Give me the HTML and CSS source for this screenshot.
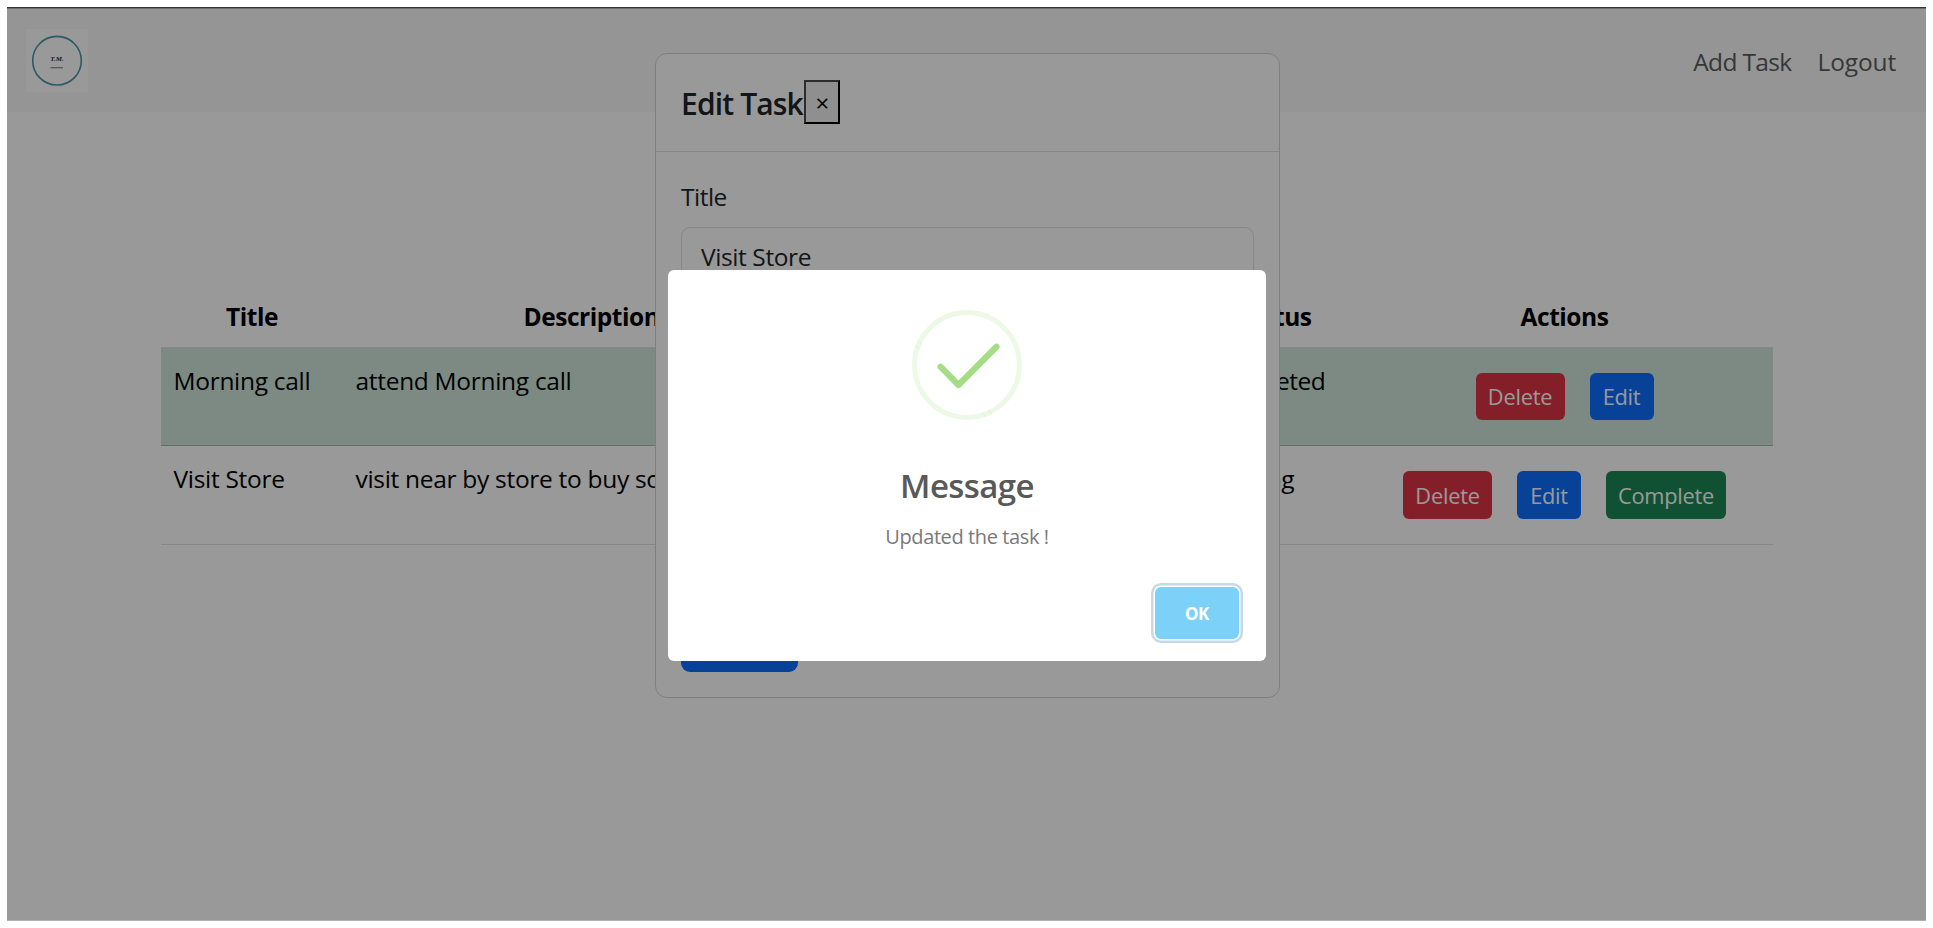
FILE: index.html
```html
<!DOCTYPE html>
<html lang="en">
<head>
<meta charset="utf-8">
<title>Task Manager</title>
<link rel="stylesheet" href="styles.css">
</head>
<body>
<div class="app">
  <header class="navbar">
    <div class="brand">
      <svg viewBox="0 0 62 63" width="62" height="63">
        <circle cx="31" cy="31.7" r="24.3" fill="none" stroke="#4a97a6" stroke-width="1.6"/>
        <text x="31" y="31.500" class="logo-name">T.M.</text>
        <path d="M24.5 38.700h12.5" stroke="#7e9297" stroke-width="1.2"/>
      </svg>
    </div>
    <nav class="links"><a class="l-add">Add Task</a><a class="l-out">Logout</a></nav>
  </header>

  <table class="tasks">
    <colgroup><col class="c1"><col class="c2"><col class="c3"><col class="c4"><col class="c5"></colgroup>
    <thead>
      <tr><th>Title</th><th>Description</th><th></th><th>Status</th><th>Actions</th></tr>
    </thead>
    <tbody>
      <tr class="done">
        <td>Morning call</td><td>attend Morning call</td><td></td><td>Completed</td>
        <td><div class="actions"><button class="btn red">Delete</button><button class="btn blue">Edit</button></div></td>
      </tr>
      <tr class="open">
        <td>Visit Store</td><td>visit near by store to buy some</td><td></td><td>Pending</td>
        <td><div class="actions"><button class="btn red">Delete</button><button class="btn blue">Edit</button><button class="btn green">Complete</button></div></td>
      </tr>
    </tbody>
  </table>

  <section class="editor">
    <div class="editor-head"><h5>Edit Task</h5><button class="close">×</button></div>
    <div class="editor-body">
      <label>Title</label>
      <div class="field">Visit Store</div>
      <div class="submit"></div>
    </div>
  </section>

  <div class="overlay"></div>

  <section class="dialog">
    <svg class="check" viewBox="0 0 110 110" width="110" height="110">
      <circle cx="55" cy="55" r="52.4" fill="none" stroke="#edf8e7" stroke-width="5"/>
      <path d="M5.500 30.500l4 3.500M3.500 35l3.500 3.500M70 102.500l4 4M76 100l4 4" stroke="#d5efc7" stroke-width=".7"/>
      <path d="M28.500 56.700L46.500 75L84.500 36.800" fill="none" stroke="#a5dc86" stroke-width="6.2" stroke-linecap="round" stroke-linejoin="round"/>
    </svg>
    <h2>Message</h2>
    <p>Updated the task !</p>
    <div class="dialog-foot"><button class="ok">OK</button></div>
  </section>
</div>
</body>
</html>
```
FILE: styles.css
```css
* { box-sizing: border-box; }
body { margin: 0; padding: 7px; background: #fff; font-family: "Open Sans", "Noto Sans", sans-serif; font-size: 24.5px; letter-spacing: -0.5px; color: #000; }
button { font-family: inherit; letter-spacing: inherit; margin: 0; }
.app { position: relative; width: 1919px; height: 914px; border-top: 1px solid #333335; border-bottom: 1px solid #b2b2b2; overflow: hidden; background: #fff; }

.navbar { height: 104px; padding: 0 30px 0 19px; display: flex; justify-content: space-between; align-items: center; background: #f8f9fa; border-top: 1px solid #b4b4b6; }
.brand { width: 62px; height: 63px; background: #fff; }
.brand svg { display: block; }
.logo-name { font: italic 700 7px "Liberation Serif", serif; text-anchor: middle; letter-spacing: 0; fill: #10353f; }
.links { display: flex; gap: 26px; padding-top: 2px; color: #5b5c5d; }
.l-add { letter-spacing: -0.65px; }
.l-out { letter-spacing: -0.15px; }

.tasks { width: 1612px; margin: 174px 0 0 154px; table-layout: fixed; border-collapse: separate; border-spacing: 0; line-height: 37px; }
.c1 { width: 182px; }
.c2 { width: 497px; }
.c3 { width: 352px; }
.c4 { width: 164px; }
.c5 { width: 417px; }
.tasks th { height: 62px; padding: 0 12px 1px; font-weight: 700; text-align: center; white-space: nowrap; letter-spacing: -0.45px; border-bottom: 1px solid #dee2e6; }
.tasks td { padding: 14px 12.500px 0; vertical-align: top; border-bottom: 1px solid #dee2e6; white-space: nowrap; letter-spacing: -0.3px; }
.tasks td:nth-child(4) { letter-spacing: -0.5px; }
.done td { height: 98px; background: #d1e7dd; border-bottom-color: #a7b9b1; }
.open td { height: 99px; }
.actions { display: flex; justify-content: center; gap: 25px; padding-top: 11px; }
.btn { height: 47px; padding: 0; border: 0; border-radius: 6px; color: #fff; font-size: 21.800px; line-height: 47px; letter-spacing: -0.25px; }
.open .btn { height: 48px; line-height: 49px; }
.red { width: 89px; background: #dc3545; }
.blue { width: 64px; background: #0d6efd; }
.green { width: 120px; background: #198754; }

.editor { position: absolute; left: 648px; top: 45px; width: 625px; height: 645px; background: #fff; border: 1px solid #d3d3d4; border-radius: 12px; color: #212529; }
.editor-head { height: 98px; padding: 26px 25px 0; display: flex; align-items: flex-start; border-bottom: 1px solid #dee2e6; }
.editor-head h5 { margin: 0; font-size: 30px; font-weight: 600; line-height: 47px; letter-spacing: -0.85px; width: 123px; white-space: nowrap; }
.close { width: 36px; height: 44px; padding: 0; background: #efefef; border: 2px solid; border-color: #4c4c4c #000 #000 #4c4c4c; font-size: 24px; color: #000; line-height: 42px; }
.editor-body { height: 546px; padding: 26px 25px; display: flex; flex-direction: column; }
.editor-body label { line-height: 37px; }
.field { height: 62px; margin-top: 12px; padding: 10px 19px; line-height: 37px; letter-spacing: -0.4px; border: 1px solid #dee2e6; border-radius: 9px; }
.submit { width: 117px; height: 60px; margin-top: auto; border-radius: 9px; background: #0d6efd; }

.overlay { position: absolute; inset: 0; background: rgba(0, 0, 0, 0.4); }

.dialog { position: absolute; left: 661px; top: 262px; width: 598px; height: 391px; padding: 40px 24px 0; display: flex; flex-direction: column; align-items: center; background: #fff; border-radius: 6px; }
.check { display: block; }
.dialog h2 { margin: 42px 0 0; font-size: 33px; line-height: 48px; font-weight: 600; letter-spacing: -0.6px; color: #595959; }
.dialog p { margin: 12px 0 0; font-size: 20px; line-height: 30px; letter-spacing: -0.4px; color: #797979; }
.dialog-foot { width: 100%; margin-top: 35px; display: flex; justify-content: flex-end; }
.ok { width: 84px; height: 52px; margin-right: 3px; border: 0; border-radius: 6px; background: #7cd1f9; color: #fff; font-size: 17px; font-weight: 700; box-shadow: 0 0 0 1.500px #fff, 0 0 0 4px #c6d9e8; }
```
